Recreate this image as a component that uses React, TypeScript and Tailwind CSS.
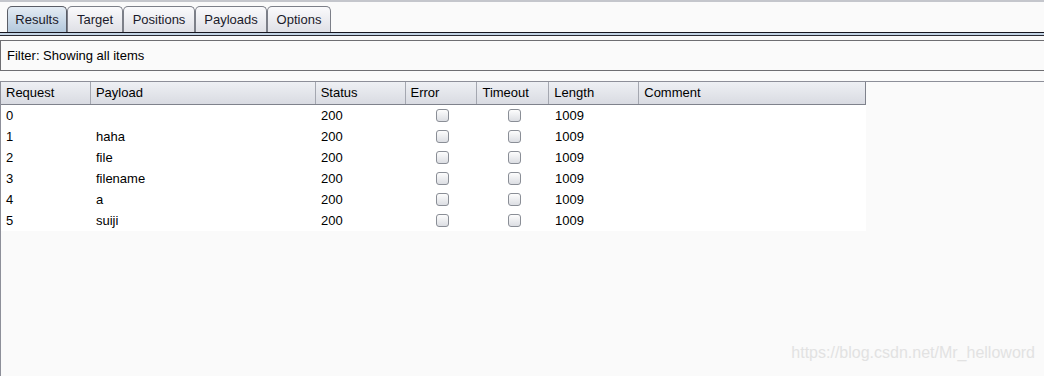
import React from 'react'

const tabs = ['Results', 'Target', 'Positions', 'Payloads', 'Options']
const tabWidths = ['w-[60px]', 'w-[56px]', 'w-[72px]', 'w-[72px]', 'w-[64px]']

const columns = [
  { name: 'Request', w: 'w-[90px]' },
  { name: 'Payload', w: 'w-[225px]' },
  { name: 'Status', w: 'w-[90px]' },
  { name: 'Error', w: 'w-[72px]' },
  { name: 'Timeout', w: 'w-[72px]' },
  { name: 'Length', w: 'w-[90px]' },
  { name: 'Comment', w: 'w-[226px]' },
]

const rows = [
  { req: '0', payload: '' },
  { req: '1', payload: 'haha' },
  { req: '2', payload: 'file' },
  { req: '3', payload: 'filename' },
  { req: '4', payload: 'a' },
  { req: '5', payload: 'suiji' },
]

const Checkbox = () => (
  <div className="w-[13px] h-[13px] rounded-[3px] border border-[#8a8e96] bg-gradient-to-b from-[#fdfdfd] to-[#dcdee3]" />
)

export default function App() {
  return (
    <div
      className="w-[1044px] h-[376px] bg-[#fafafa] text-[13px] text-black relative overflow-hidden"
      style={{ fontFamily: '"Liberation Sans", Arial, sans-serif' }}
    >
      {/* tab strip */}
      <div className="h-[2px] bg-[#c4c6cc]" />
      <div className="flex items-end h-[30px] pl-[7px] pt-[4px]">
        {tabs.map((t, i) => (
          <div
            key={t}
            className={`${tabWidths[i]} h-[26px] flex items-center justify-center rounded-t-[5px] border border-b-0 ${
              i === 0
                ? 'border-[#5a5d66] bg-gradient-to-b from-[#e4ecf4] to-[#b3c8dc]'
                : 'border-[#7c7f88] bg-gradient-to-b from-[#fafafc] to-[#dfe0e6]'
            }`}
          >
            <span className="text-[#1a1a2a]">{t}</span>
          </div>
        ))}
      </div>
      <div className="h-[1px] bg-[#15151f]" />
      <div className="h-[2px] bg-[#c2d3e4]" />
      <div className="h-[1px] bg-[#2a2a33]" />

      {/* filter */}
      <div className="mt-[4px] h-[31px] border-y border-l border-[#6e6e72] flex items-center pl-[6px] bg-[#fafafa]">
        Filter: Showing all items
      </div>

      {/* table */}
      <div className="mt-[10px] border-t border-l border-[#8d8f99] h-[300px]">
        <div className="w-[865px]">
          <div className="flex h-[23px] border-b border-r border-[#7f828c] bg-gradient-to-b from-[#eef0f4] to-[#d9dbe2]">
            {columns.map((c, i) => (
              <div
                key={c.name}
                className={`${c.w} flex items-center pl-[5px] ${i < columns.length - 1 ? 'border-r border-[#a4a7b0]' : ''}`}
              >
                {c.name}
              </div>
            ))}
          </div>
          <div className="bg-white">
            {rows.map((r) => (
              <div key={r.req} className="flex h-[21px] items-center">
                <div className="w-[90px] pl-[5px]">{r.req}</div>
                <div className="w-[225px] pl-[5px]">{r.payload}</div>
                <div className="w-[90px] pl-[5px]">200</div>
                <div className="w-[72px] flex justify-center">
                  <Checkbox />
                </div>
                <div className="w-[72px] flex justify-center">
                  <Checkbox />
                </div>
                <div className="w-[90px] pl-[5px]">1009</div>
                <div className="w-[226px]" />
              </div>
            ))}
          </div>
        </div>
      </div>

      <div
        className="absolute right-[9px] bottom-[11px] text-[16px] text-[#e2e2e2]"
        style={{ fontFamily: 'Arial, "Liberation Sans", sans-serif' }}
      >
        https://blog.csdn.net/Mr_helloword
      </div>
    </div>
  )
}
